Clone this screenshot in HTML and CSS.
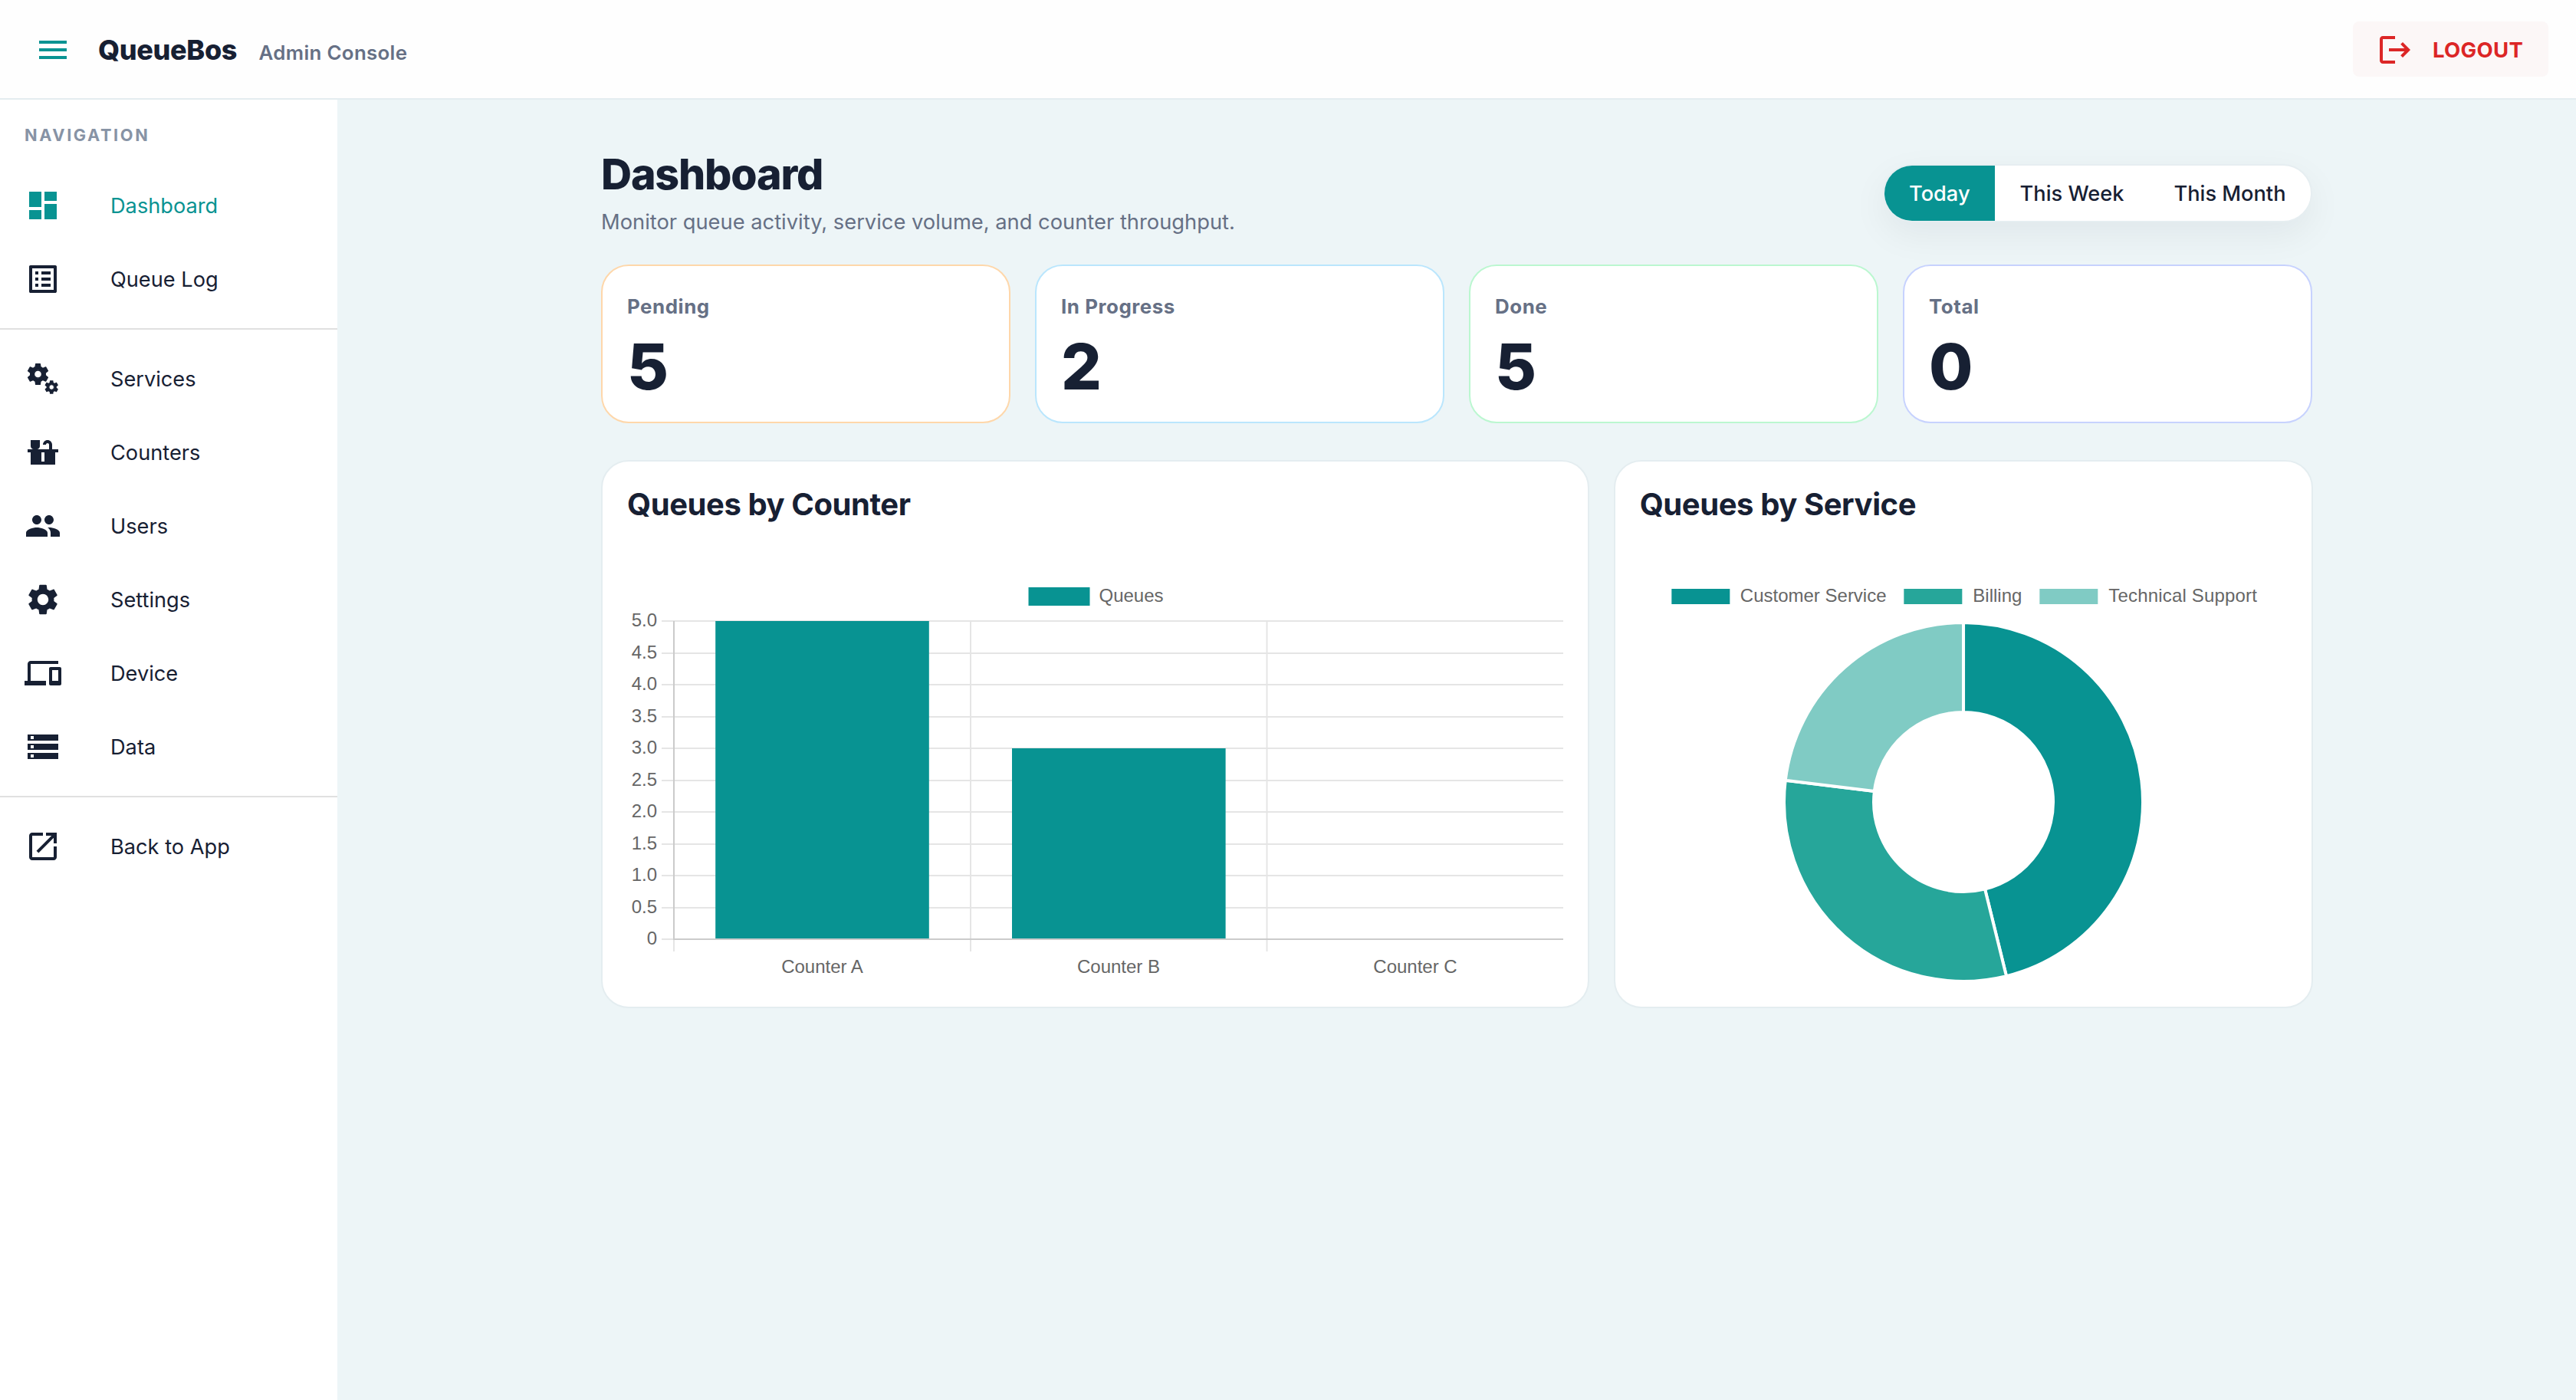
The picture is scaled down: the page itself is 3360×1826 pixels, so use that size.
FILE: index.html
```html
<!DOCTYPE html>
<html lang="en">
<head>
<meta charset="utf-8">
<title>QueueBos Admin Console</title>
<link rel="stylesheet" href="styles.css">
</head>
<body>
<header class="topbar">
  <svg class="icon menu-icon" viewBox="0 0 24 24"><path d="M3 18h18v-2H3zm0-5h18v-2H3zm0-7v2h18V6z"/></svg>
  <span class="brand">QueueBos</span>
  <span class="brand-sub">Admin Console</span>
  <button class="logout">
    <svg class="icon" viewBox="0 0 24 24"><path d="m17 7-1.41 1.41L18.17 11H8v2h10.17l-2.58 2.58L17 17l5-5zM4 5h8V3H4c-1.1 0-2 .9-2 2v14c0 1.1.9 2 2 2h8v-2H4z"/></svg>
    <span class="logout-label">LOGOUT</span>
  </button>
</header>
<div class="shell">
  <nav class="sidebar">
    <div class="nav-title">NAVIGATION</div>
    <div class="nav-group">
      <a class="nav-item active"><svg class="icon" viewBox="0 0 24 24"><path d="M3 13h8V3H3zm0 8h8v-6H3zm10 0h8V11h-8zm0-18v6h8V3z"/></svg><span>Dashboard</span></a>
      <a class="nav-item"><svg class="icon" viewBox="0 0 24 24"><path d="M19 5v14H5V5zm1.1-2H3.9c-.5 0-.9.4-.9.9v16.2c0 .4.4.9.9.9h16.2c.4 0 .9-.5.9-.9V3.900c0-.5-.5-.9-.9-.9M11 7h6v2h-6zm0 4h6v2h-6zm0 4h6v2h-6zM7 7h2v2H7zm0 4h2v2H7zm0 4h2v2H7z"/></svg><span>Queue Log</span></a>
    </div>
    <div class="nav-group">
      <a class="nav-item"><svg class="icon" viewBox="0 0 24 24"><use href="#gear" transform="translate(8.75 9) scale(.729) translate(-12 -12)"/><circle class="hub" cx="8.75" cy="9" r="2.500" stroke-width=".7"/><use href="#gear" transform="translate(17.600 17.500) scale(.46) translate(-12 -12)"/><circle class="hub" cx="17.600" cy="17.500" r="1.600" stroke-width=".4"/></svg><span>Services</span></a>
      <a class="nav-item"><svg class="icon" viewBox="0 0 24 24"><path d="M18 10V7c0-1.660-1.340-3-3-3s-3 1.340-3 3h2c0-.55.45-1 1-1s1 .45 1 1v3H8c1.100 0 2-.9 2-2V4H4v4c0 1.100.9 2 2 2H2v2h2v8h16v-8h2v-2zm-5 8h-2v-6h2z"/></svg><span>Counters</span></a>
      <a class="nav-item"><svg class="icon" viewBox="0 0 24 24"><path d="M16 11c1.660 0 2.990-1.340 2.990-3S17.660 5 16 5s-3 1.340-3 3 1.340 3 3 3m-8 0c1.660 0 2.990-1.340 2.990-3S9.660 5 8 5 5 6.340 5 8s1.340 3 3 3m0 2c-2.330 0-7 1.170-7 3.500V19h14v-2.500c0-2.330-4.670-3.500-7-3.500m8 0c-.29 0-.62.02-.97.05 1.160.84 1.970 1.970 1.970 3.450V19h6v-2.500c0-2.330-4.670-3.500-7-3.500"/></svg><span>Users</span></a>
      <a class="nav-item"><svg class="icon" viewBox="0 0 24 24"><path id="gear" d="M19.140 12.940c.04-.3.06-.61.06-.94 0-.32-.02-.64-.07-.94l2.030-1.580c.18-.14.23-.41.12-.61l-1.920-3.320c-.12-.22-.37-.29-.59-.22l-2.390.96c-.5-.38-1.030-.7-1.620-.94l-.36-2.540c-.04-.24-.24-.41-.48-.41h-3.840c-.24 0-.43.17-.47.41l-.36 2.540c-.59.24-1.130.57-1.620.94l-2.390-.96c-.22-.08-.47 0-.59.22L2.740 8.870c-.12.21-.08.47.12.61l2.030 1.580c-.05.3-.09.63-.09.94s.02.64.07.94l-2.030 1.580c-.18.14-.23.41-.12.61l1.920 3.320c.12.22.37.29.59.22l2.390-.96c.5.38 1.030.7 1.620.94l.36 2.540c.05.24.24.41.48.41h3.840c.24 0 .44-.17.47-.41l.36-2.540c.59-.24 1.130-.56 1.620-.94l2.390.96c.22.08.47 0 .59-.22l1.920-3.320c.12-.22.07-.47-.12-.61zM12 15.600c-1.980 0-3.600-1.620-3.600-3.600s1.620-3.600 3.600-3.600 3.600 1.620 3.600 3.600-1.620 3.600-3.600 3.600"/></svg><span>Settings</span></a>
      <a class="nav-item"><svg class="icon" viewBox="0 0 24 24"><path d="M4 6h18V4H4c-1.100 0-2 .9-2 2v11H0v3h14v-3H4zm19 2h-6c-.55 0-1 .45-1 1v10c0 .55.45 1 1 1h6c.55 0 1-.45 1-1V9c0-.55-.45-1-1-1m-1 9h-4v-7h4z"/></svg><span>Device</span></a>
      <a class="nav-item"><svg class="icon" viewBox="0 0 24 24"><path d="M2 20h20v-4H2zm2-3h2v2H4zM2 4v4h20V4zm4 3H4V5h2zm-4 7h20v-4H2zm2-3h2v2H4z"/></svg><span>Data</span></a>
    </div>
    <div class="nav-group">
      <a class="nav-item"><svg class="icon" viewBox="0 0 24 24"><path d="M19 19H5V5h7V3H5c-1.110 0-2 .9-2 2v14c0 1.100.89 2 2 2h14c1.100 0 2-.9 2-2v-7h-2zM14 3v2h3.590l-9.830 9.830 1.410 1.410L19 6.410V10h2V3z"/></svg><span>Back to App</span></a>
    </div>
  </nav>
  <main class="main">
    <div class="content">
      <div class="page-head">
        <div>
          <h1 class="page-title">Dashboard</h1>
          <p class="page-sub">Monitor queue activity, service volume, and counter throughput.</p>
        </div>
        <div class="range">
          <span class="range-item selected">Today</span>
          <span class="range-item">This Week</span>
          <span class="range-item">This Month</span>
        </div>
      </div>
      <div class="stats">
        <div class="stat pending"><span class="stat-label">Pending</span><span class="stat-value">5</span></div>
        <div class="stat progress"><span class="stat-label">In Progress</span><span class="stat-value">2</span></div>
        <div class="stat done"><span class="stat-label">Done</span><span class="stat-value">5</span></div>
        <div class="stat total"><span class="stat-label">Total</span><span class="stat-value">0</span></div>
      </div>
      <div class="charts">
        <section class="panel">
          <h2 class="panel-title">Queues by Counter</h2>
          <svg class="chart" width="1221" height="560" viewBox="818 721 1221 560">
            <rect class="c1" x="1341.500" y="766" width="80" height="24"/>
            <text x="1433.500" y="785">Queues</text>
            <path class="grid" d="M863 810H2039M863 852H2039M863 893H2039M863 935H2039M863 976H2039M863 1018H2039M863 1059H2039M863 1101H2039M863 1142H2039M863 1184H2039M863 1225H880M1266 810V1241M1652.500 810V1241M879 1226V1241"/>
            <rect class="c1" x="933.200" y="810" width="278.600" height="415"/>
            <rect class="c1" x="1320" y="976" width="278.600" height="249"/>
            <path class="axis" d="M879 810V1226M880 1225H2039"/>
            <g text-anchor="end">
              <text x="857" y="817">5.0</text><text x="857" y="859">4.5</text><text x="857" y="900">4.0</text><text x="857" y="942">3.5</text><text x="857" y="983">3.0</text><text x="857" y="1025">2.5</text><text x="857" y="1066">2.0</text><text x="857" y="1108">1.5</text><text x="857" y="1149">1.0</text><text x="857" y="1191">0.5</text><text x="857" y="1232">0</text>
            </g>
            <g text-anchor="middle">
              <text x="1072.500" y="1269">Counter A</text><text x="1459" y="1269">Counter B</text><text x="1846" y="1269">Counter C</text>
            </g>
          </svg>
        </section>
        <section class="panel">
          <h2 class="panel-title">Queues by Service</h2>
          <svg class="chart" width="844" height="560" viewBox="2138.670 721 844 560">
            <rect class="c1" x="2180" y="768" width="76" height="20"/><text x="2269.500" y="785">Customer Service</text>
            <rect class="c2" x="2483" y="768" width="76" height="20"/><text x="2573" y="785">Billing</text>
            <rect class="c3" x="2660" y="768" width="76" height="20"/><text x="2750" y="785" textLength="193.500">Technical Support</text>
            <g transform="translate(2560.700 1046)" class="donut">
              <path class="c1" d="M0-234A234 234 0 0 1 56 227.200L28 113.600A117 117 0 0 0 0-117Z"/>
              <path class="c2" d="M56 227.200A234 234 0 0 1-232.300-28.200L-116.150-14.100A117 117 0 0 0 28 113.600Z"/>
              <path class="c3" d="M-232.300-28.200A234 234 0 0 1 0-234L0-117A117 117 0 0 0-116.150-14.100Z"/>
            </g>
          </svg>
        </section>
      </div>
    </div>
  </main>
</div>
</body>
</html>
```
FILE: styles.css
```css
* { box-sizing: border-box; }
body {
  margin: 0;
  height: 1826px;
  display: flex;
  flex-direction: column;
  overflow: hidden;
  font-family: Inter, sans-serif;
  color: #172033;
  background: #edf5f7;
}
.icon { width: 48px; height: 48px; flex: none; fill: currentColor; display: block; }
.hub { fill: none; stroke: currentColor; }
.topbar {
  height: 130px;
  flex: none;
  display: flex;
  align-items: center;
  padding: 2px 36px 0 45px;
  background: #fefefe;
  border-bottom: 2px solid #e4edf0;
}
.menu-icon { color: #089392; }
.brand { margin-left: 35px; font-size: 36px; font-weight: 800; letter-spacing: -0.360px; }
.brand-sub { margin: 6px 0 0 28.500px; font-size: 25.900px; font-weight: 600; letter-spacing: 0.300px; color: #667085; }
.logout {
  margin: -2px 0 0 auto;
  width: 255px;
  height: 72px;
  display: flex;
  align-items: center;
  padding: 2px 0 0 31px;
  border: 0;
  border-radius: 8px;
  background: #fcf7f7;
  color: #dc2626;
  font: 700 27.500px Inter, sans-serif;
}
.logout-label { margin-left: 25px; letter-spacing: 0.300px; }
.shell { flex: 1; display: flex; min-height: 0; }
.sidebar { width: 440px; flex: none; background: #fff; }
.nav-title {
  height: 74px;
  padding: 32px 0 0 32px;
  font-size: 21.760px;
  line-height: 28px;
  font-weight: 700;
  letter-spacing: 2.600px;
  color: #8793a5;
}
.nav-group { padding: 16px 0; border-bottom: 2px solid #e0e0e0; }
.nav-group:last-child { border-bottom: 0; }
.nav-item { height: 96px; display: flex; align-items: center; gap: 64px; padding-left: 32px; font-size: 27.200px; }
.nav-item span { line-height: 34px; padding-top: 1px; }
.nav-item.active { color: #089392; }
.main { flex: 1; display: flex; justify-content: center; }
.content { width: 2232px; padding-top: 64px; }
.page-head { height: 151px; display: flex; justify-content: space-between; }
.page-title { margin: 0; font-size: 55.500px; line-height: 66px; font-weight: 800; letter-spacing: -1.200px; }
.page-sub { margin: 13px 0 0; font-size: 27.300px; line-height: 34px; color: #667085; }
.range {
  height: 76px;
  margin-top: 20px;
  display: flex;
  border: 2px solid #e6eef1;
  border-radius: 38px;
  overflow: hidden;
  background: #fff;
  box-shadow: 0 16px 48px rgba(15, 23, 42, .06);
}
.range-item { padding: 0 32.500px; line-height: 73px; font-size: 27.200px; font-weight: 500; }
.range-item.selected { background: #089392; color: #fff; }
.stats { display: grid; grid-template-columns: repeat(4, 1fr); gap: 32px; }
.stat { height: 207px; padding: 34px 32px 0; border: 2px solid; border-radius: 36px; background: #fff; display: flex; flex-direction: column; }
.stat-label { font-size: 25.900px; line-height: 37px; font-weight: 700; letter-spacing: 0.550px; color: #667085; }
.stat-value { margin-top: 19px; font-size: 83px; line-height: 82px; font-weight: 800; }
.pending { border-color: #fed7aa; }
.progress { border-color: #bae6fd; }
.done { border-color: #bbf7d0; }
.total { border-color: #c7d2fe; }
.charts { margin-top: 48px; display: grid; grid-template-columns: 1288.670px 1fr; gap: 32px; }
.panel { height: 715px; padding: 32px 32px 0; border: 2px solid #e4edf0; border-radius: 36px; background: #fff; }
.panel-title { margin: 0; height: 87px; font-size: 40px; line-height: 48px; font-weight: 700; letter-spacing: -0.420px; }
.chart { display: block; }
.chart text { font-family: "Liberation Sans", Arial, sans-serif; font-size: 24px; fill: #666; }
.c1 { fill: #089392; }
.c2 { fill: #26a69a; }
.c3 { fill: #80cbc4; }
.grid { stroke: #e5e5e5; stroke-width: 2; fill: none; }
.axis { stroke: #cbcbcb; stroke-width: 2; fill: none; }
.donut path { stroke: #fff; stroke-width: 4; }
```
